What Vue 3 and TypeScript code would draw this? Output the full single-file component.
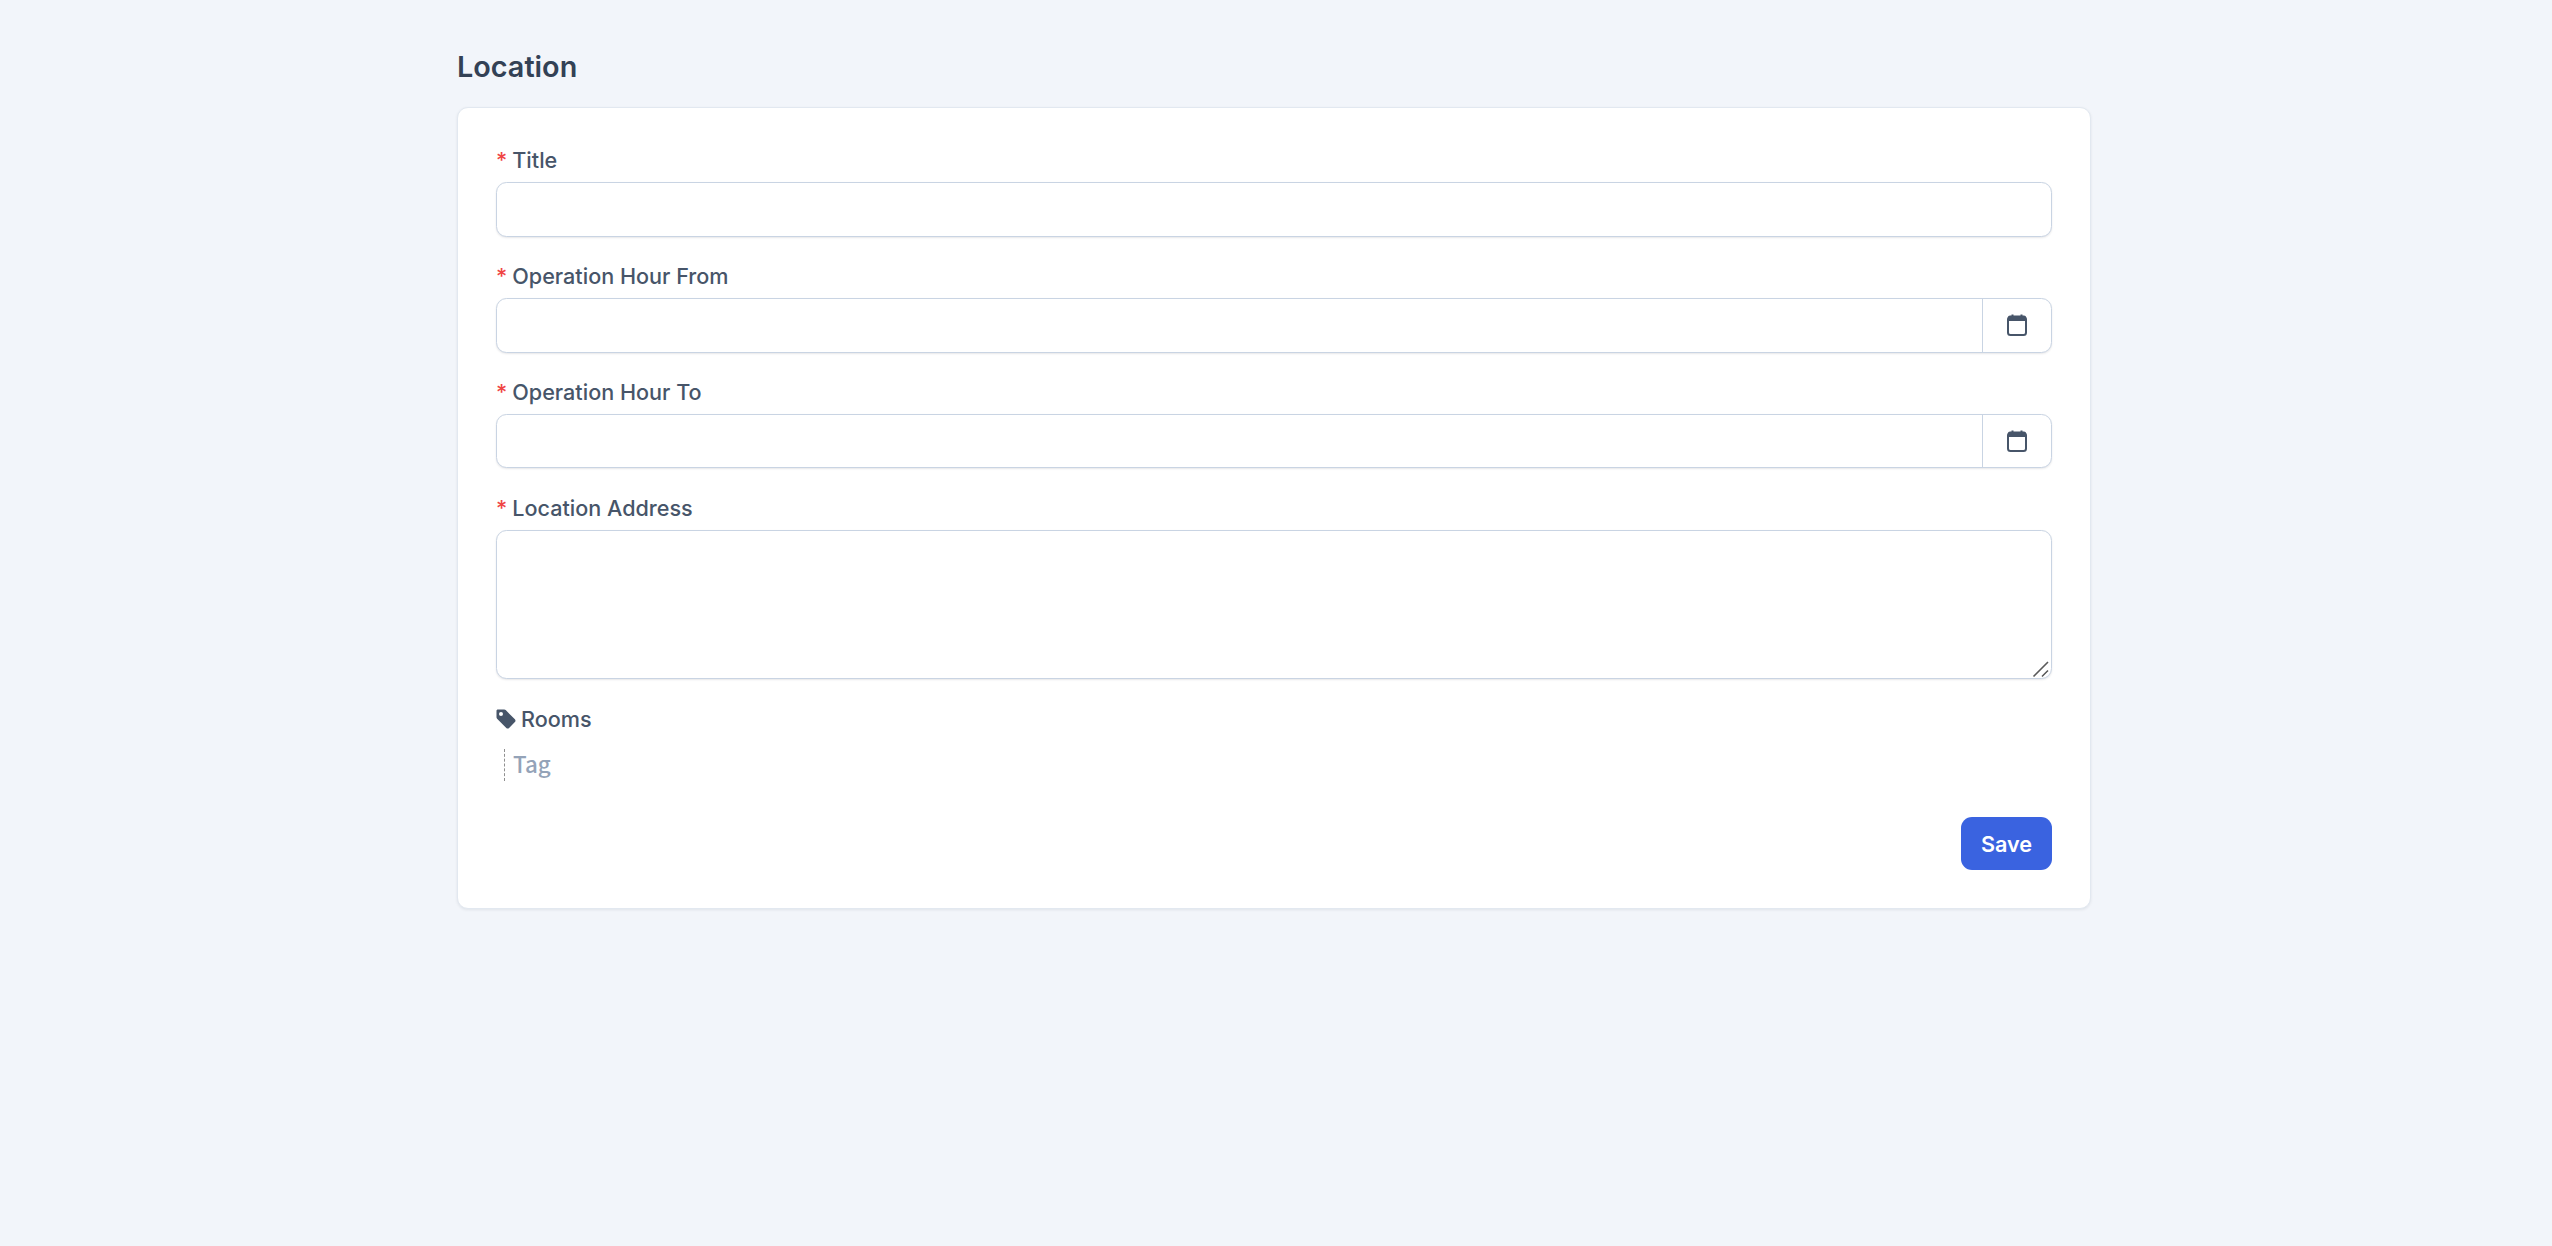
<script setup lang="ts">
interface Field {
  label: string
  kind: 'text' | 'date' | 'area'
}
const fields: Field[] = [
  { label: 'Title', kind: 'text' },
  { label: 'Operation Hour From', kind: 'date' },
  { label: 'Operation Hour To', kind: 'date' },
  { label: 'Location Address', kind: 'area' },
]
</script>

<template>
  <main class="page">
    <section class="wrap">
      <h1 class="heading">Location</h1>
      <form class="card" @submit.prevent>
        <div v-for="f in fields" :key="f.label" class="field">
          <label class="label"><span class="req">*</span>{{ f.label }}</label>
          <div v-if="f.kind === 'area'" class="area-wrap">
            <textarea class="control area"></textarea>
            <svg class="grip" width="18" height="18" viewBox="0 0 18 18" fill="none">
              <path d="M1.5 16.5 16 2M10 16.5 16 10.5" stroke="#5a5a5a" stroke-width="1.6" />
              <path d="M3 17 16.5 3.500M11.500 17 16.500 12" stroke="#ffffff" stroke-width="0.8" opacity="0.8" />
            </svg>
          </div>
          <div v-else-if="f.kind === 'date'" class="control group">
            <input class="bare" type="text" />
            <span class="addon">
              <svg width="20" height="22" viewBox="0 0 20 22" fill="none">
                <path d="M5.5 0.5v3M14.5 0.5v3" stroke="#475569" stroke-width="2" />
                <rect x="1" y="3" width="18" height="18" rx="2.5" stroke="#475569" stroke-width="2" />
                <path d="M1 3.5a2 2 0 0 1 2-2h14a2 2 0 0 1 2 2V7H1z" fill="#475569" />
              </svg>
            </span>
          </div>
          <input v-else class="control single" type="text" />
        </div>
        <div class="rooms">
          <div class="rooms-label">
            <svg width="20" height="20" viewBox="0 0 20 20">
              <path fill="#475569" fill-rule="evenodd" d="M1.800 0.500h6.400c.6 0 1.100.2 1.500.6l9.200 9.200c.8.800.8 2 0 2.800l-5.800 5.800c-.8.800-2 .8-2.800 0L1.100 9.700C.7 9.300.5 8.800.5 8.200V1.800C.5 1.100 1.100.5 1.800.5zM5 3a2 2 0 1 0 0 4 2 2 0 0 0 0-4z" />
            </svg>
            <span>Rooms</span>
          </div>
          <div class="tag-row">
            <input class="tag" type="text" placeholder="Tag" />
          </div>
        </div>
        <div class="actions">
          <button class="save" type="submit">Save</button>
        </div>
      </form>
    </section>
  </main>
</template>

<style>
html, body {
  margin: 0;
  background: #f2f5fa;
}
</style>

<style scoped>
.page {
  min-height: 1246px;
  box-sizing: border-box;
  padding: 48px 0 0 457px;
  background: #f2f5fa;
  font-family: Inter, "Liberation Sans", sans-serif;
  color: #334155;
}
.wrap {
  width: 1634px;
}
.heading {
  margin: 0 0 21px;
  font-size: 28.8px;
  line-height: 38px;
  font-weight: 600;
  color: #334155;
}
.card {
  box-sizing: border-box;
  height: 802px;
  padding: 37.4px 38px 0;
  background: #fff;
  border: 1px solid #e2e8f0;
  border-radius: 11px;
  box-shadow: 0 1px 3px rgba(15, 23, 42, 0.08);
  display: flex;
  flex-direction: column;
}
.field {
  display: flex;
  flex-direction: column;
  margin-bottom: 24.4px;
}
.label {
  display: block;
  font-size: 21.6px;
  line-height: 30px;
  font-weight: 500;
  color: #475569;
  margin-bottom: 7px;
}
.req {
  color: #ef4444;
  margin-right: 5px;
}
.control {
  box-sizing: border-box;
  width: 100%;
  border: 1px solid #c9d4e3;
  border-radius: 10.5px;
  background: #fff;
  box-shadow: 0 1px 2px rgba(15, 23, 42, 0.1);
  outline: none;
  margin: 0;
}
.single, .group {
  height: 54.4px;
}
.group {
  display: flex;
  align-items: stretch;
}
.bare {
  flex: 1;
  min-width: 0;
  border: 0;
  outline: none;
  background: transparent;
  padding: 0;
}
.addon {
  width: 68px;
  border-left: 1px solid #c9d4e3;
  display: flex;
  align-items: center;
  justify-content: center;
}
.area-wrap {
  position: relative;
}
.area {
  display: block;
  height: 149.6px;
  resize: none;
  padding: 0;
}
.grip {
  position: absolute;
  right: 2px;
  bottom: 1px;
}
.rooms-label {
  display: flex;
  align-items: center;
  gap: 5px;
  font-size: 21.6px;
  line-height: 30px;
  font-weight: 500;
  color: #475569;
}
.tag-row {
  margin-top: 15px;
  padding-left: 8px;
}
.tag {
  display: block;
  box-sizing: border-box;
  width: 200px;
  height: 32px;
  border: 0;
  border-left: 1px dashed #8f8f8f;
  outline: none;
  padding: 0 0 3px 8px;
  font-family: "Noto Sans CJK SC", "Noto Sans", sans-serif;
  font-size: 22.4px;
  font-weight: 500;
  background: transparent;
}
.tag::placeholder {
  color: #94a3b8;
  opacity: 1;
}
.actions {
  display: flex;
  justify-content: flex-end;
  margin-top: 36.6px;
}
.save {
  width: 91px;
  height: 53px;
  border: 0;
  border-radius: 11px;
  background: #3a63e0;
  color: #fff;
  font-family: inherit;
  font-size: 21.6px;
  font-weight: 600;
  padding: 0;
}
</style>
